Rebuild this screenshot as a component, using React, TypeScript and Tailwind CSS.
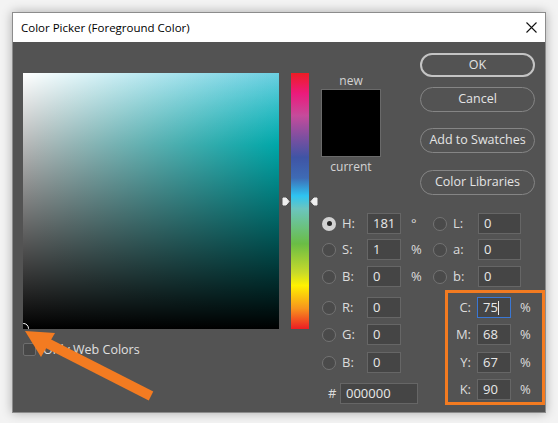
import React from "react";

function Radio({ checked = false }: { checked?: boolean }) {
  if (checked) {
    return (
      <div className="w-[14px] h-[14px] rounded-full bg-[#d2d2d2] flex items-center justify-center shrink-0">
        <div className="w-[5px] h-[5px] rounded-full bg-[#262626]" />
      </div>
    );
  }
  return <div className="w-[14px] h-[14px] rounded-full bg-[#4a4a4a] border border-[#737373] shrink-0" />;
}

function Box({ value, w = "w-[34px]", active = false }: { value: string; w?: string; active?: boolean }) {
  return (
    <div
      className={
        "h-[21px] bg-[#454545] border flex items-center pl-[5px] text-[13px] text-[#e8e8e8] " +
        w +
        (active ? " border-[#3a77d4]" : " border-[#666666]")
      }
    >
      {value}
      {active && <span className="w-px h-[14px] bg-[#e8e8e8]" />}
    </div>
  );
}

function Row({
  label,
  value,
  unit,
  checked = false,
  w = "w-[34px]",
  className = "",
}: {
  label: string;
  value: string;
  unit?: string;
  checked?: boolean;
  w?: string;
  className?: string;
}) {
  return (
    <div className={"flex items-center h-[21px] " + className}>
      <Radio checked={checked} />
      <span className="ml-[6px] w-[25px] text-[13px] text-[#dcdcdc]">{label}</span>
      <Box value={value} w={w} />
      {unit && <span className="ml-[10px] text-[13px] text-[#dcdcdc]">{unit}</span>}
    </div>
  );
}

function CmykRow({ label, value, active = false, className = "" }: { label: string; value: string; active?: boolean; className?: string }) {
  return (
    <div className={"flex items-center h-[21px] " + className}>
      <span className="w-[23px] text-right text-[13px] text-[#dcdcdc]">{label}</span>
      <div className="ml-[6px]">
        <Box value={value} active={active} />
      </div>
      <span className="ml-[9px] text-[13px] text-[#dcdcdc]">%</span>
    </div>
  );
}

function Pill({ label, primary = false, className = "" }: { label: string; primary?: boolean; className?: string }) {
  return (
    <button
      className={
        "w-[115px] rounded-full flex items-center justify-center text-[12.5px] text-[#e4e4e4] " +
        (primary ? "h-[24px] border-2 border-[#c4c4c4]" : "h-[25px] border border-[#858585]") +
        " " +
        className
      }
    >
      {label}
    </button>
  );
}

export default function App() {
  return (
    <div className="relative w-[558px] h-[423px] bg-[#f3f3f3] pl-[12px] pt-[12px] font-['Open_Sans',sans-serif] overflow-hidden">
      <div className="w-[534px] h-[401px] border border-[#8c8c8c] bg-[#535353] shadow-[0_0_10px_rgba(0,0,0,0.3)] flex flex-col">
        <div className="h-[29px] bg-white flex items-center justify-between pl-[8px] pr-[8px] shrink-0">
          <span className="text-[11.5px] text-black">Color Picker (Foreground Color)</span>
          <svg width="11" height="11" viewBox="0 0 11 11">
            <path d="M0.5 0.5 L10.5 10.5 M10.5 0.5 L0.5 10.5" stroke="#111" strokeWidth="1.1" />
          </svg>
        </div>

        <div className="flex items-start pl-[10px] pt-[11px]">
          {/* colour field */}
          <div className="mt-[20px] w-[256px]">
            <div className="relative w-[256px] h-[256px] overflow-hidden [background-image:linear-gradient(to_bottom,rgba(0,0,0,0),#000),linear-gradient(to_right,#fff,rgba(255,255,255,0)),linear-gradient(to_bottom,#6dcfe1,#00e8ea_28%,#00f0f0)]">
              <div className="absolute left-[-5px] bottom-[-5px] w-[11px] h-[11px] rounded-full border border-white" />
            </div>
            <div className="mt-[14px] h-[13px] flex items-center">
              <div className="w-[13px] h-[13px] bg-[#474747] border border-[#6e6e6e] rounded-[2px]" />
              <span className="ml-[7px] text-[12.5px] leading-[13px] text-[#e0e0e0]">Only Web Colors</span>
            </div>
          </div>

          {/* hue bar */}
          <div className="relative ml-[12px] mt-[20px] w-[19px] h-[256px] [background-image:linear-gradient(to_bottom,#ed1c24_0%,#ec1a7c_8%,#c54b9b_16.7%,#7e4fa0_25%,#3f54a5_33%,#3e6bb5_41%,#2ec4f1_48%,#6bc5bf_53%,#6abd45_66.7%,#c8da2a_78%,#fff200_83%,#f7941d_92%,#ed1c24_100%)]">
            <svg className="absolute left-[-9px] top-[124px]" width="8" height="9" viewBox="0 0 8 9">
              <path d="M1 1 L4 1 L7 4.5 L4 8 L1 8 Z" fill="#f0f0f0" stroke="#f0f0f0" strokeLinejoin="round" />
            </svg>
            <svg className="absolute right-[-9px] top-[124px]" width="8" height="9" viewBox="0 0 8 9">
              <path d="M7 1 L4 1 L1 4.5 L4 8 L7 8 Z" fill="#f0f0f0" stroke="#f0f0f0" strokeLinejoin="round" />
            </svg>
          </div>

          {/* right side */}
          <div className="ml-[12px] flex flex-col">
            <div className="flex items-start">
              <div className="w-[60px] mt-[20px] flex flex-col items-center">
                <span className="text-[12px] leading-[16px] text-[#d4d4d4]">new</span>
                <div className="w-[60px] h-[68px] bg-black border border-[#6a6a6a]" />
                <span className="mt-[2px] text-[12px] leading-[16px] text-[#d4d4d4]">current</span>
              </div>
              <div className="ml-[39px] flex flex-col">
                <Pill label="OK" primary />
                <Pill label="Cancel" className="mt-[10px] h-[24px]" />
                <Pill label="Add to Swatches" className="mt-[16px]" />
                <Pill label="Color Libraries" className="mt-[17px]" />
              </div>
            </div>

            <div className="mt-[18px] flex items-start">
              <div className="ml-[1px] w-[111px] flex flex-col">
                <Row checked label="H:" value="181" unit="°" />
                <Row label="S:" value="1" unit="%" className="mt-[5px]" />
                <Row label="B:" value="0" unit="%" className="mt-[6px]" />
                <Row label="R:" value="0" className="mt-[10px]" />
                <Row label="G:" value="0" className="mt-[6px]" />
                <Row label="B:" value="0" className="mt-[7px]" />
                <div className="mt-[10px] flex items-center h-[21px]">
                  <span className="ml-[6px] w-[12px] text-[13px] text-[#dcdcdc]">#</span>
                  <Box value="000000" w="w-[78px]" />
                </div>
              </div>

              <div className="flex flex-col">
                <Row label="L:" value="0" w="w-[43px]" />
                <Row label="a:" value="0" w="w-[43px]" className="mt-[5px]" />
                <Row label="b:" value="0" w="w-[43px]" className="mt-[6px]" />
                <div className="mt-[3px] ml-[12px] w-[100px] border-[3px] border-[#f37b21] pt-[4px] pb-[2px] flex flex-col">
                  <CmykRow label="C:" value="75" active />
                  <CmykRow label="M:" value="68" className="mt-[6px]" />
                  <CmykRow label="Y:" value="67" className="mt-[7px]" />
                  <CmykRow label="K:" value="90" className="mt-[6px]" />
                </div>
              </div>
            </div>
          </div>
        </div>
      </div>

      {/* annotation arrow */}
      <svg className="absolute left-0 top-0 pointer-events-none" width="558" height="423" viewBox="0 0 558 423">
        <line x1="45" y1="342" x2="151" y2="396" stroke="#f37b21" strokeWidth="10" />
        <polygon points="25,331 55,333 41,357" fill="#f37b21" />
      </svg>
    </div>
  );
}
